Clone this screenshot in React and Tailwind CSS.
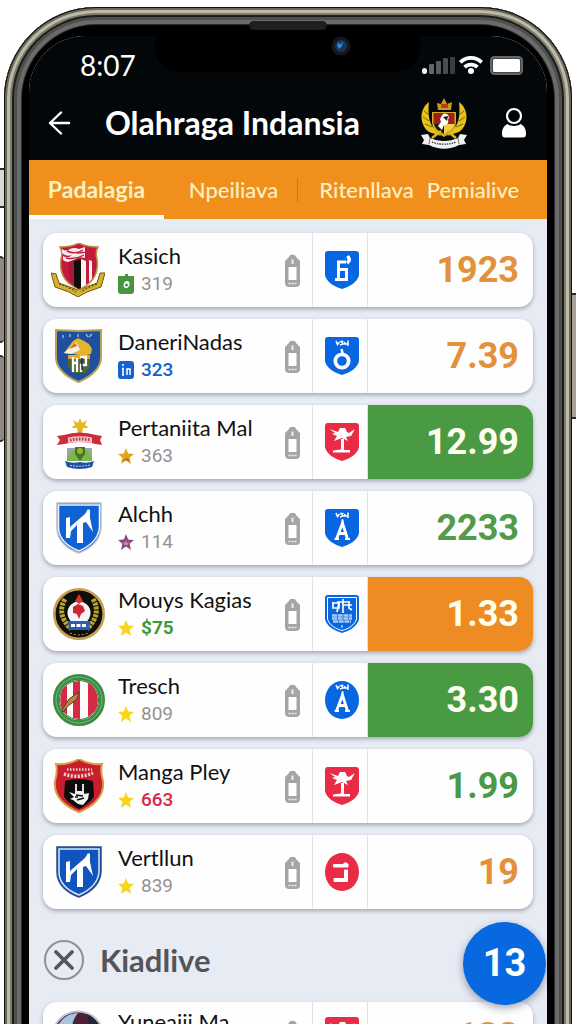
import clsx from "clsx";

const BLUE = "#0866e0";
const RED = "#e82c46";

const TEAMS = [
  { name: "Kasich", crest: "harbor", mark: "bag", score: "319", scoreClass: "text-[#929292]", badge: "six", odd: "1923", oddClass: "text-[#e3913a]" },
  { name: "DaneriNadas", crest: "house", mark: "in", score: "323", scoreClass: "text-[#0f5fc9] font-medium", badge: "ring", odd: "7.39", oddClass: "text-[#e3913a]" },
  { name: "Pertaniita Mal", crest: "ribbon", mark: "gold", score: "363", scoreClass: "text-[#929292]", badge: "palm", odd: "12.99", oddClass: "bg-[#4a9a44] text-[#fffff0]" },
  { name: "Alchh", crest: "silver", mark: "plum", score: "114", scoreClass: "text-[#929292]", badge: "tower", odd: "2233", oddClass: "text-[#519b4b]" },
  { name: "Mouys Kagias", crest: "laurel", mark: "star", score: "$75", scoreClass: "text-[#3f9a3c] font-bold", badge: "book", odd: "1.33", oddClass: "bg-[#ee8b22] text-[#fffff0]" },
  { name: "Tresch", crest: "stripes", mark: "star", score: "809", scoreClass: "text-[#929292]", badge: "towerRound", odd: "3.30", oddClass: "bg-[#4a9a44] text-[#fffff0]" },
  { name: "Manga Pley", crest: "crimson", mark: "star", score: "663", scoreClass: "text-[#dc2448] font-medium", badge: "palm", odd: "1.99", oddClass: "text-[#4a9a44]" },
  { name: "Vertllun", crest: "navy", mark: "star", score: "839", scoreClass: "text-[#929292]", badge: "corner", odd: "19", oddClass: "text-[#e3913a]" },
];

const NEXT_TEAM = { name: "Yuneaiji Ma", crest: "globe", mark: "star", score: "412", scoreClass: "text-[#929292]", badge: "palm", odd: "133", oddClass: "text-[#e3913a]" };

export default function App() {
  return (
    <div className="relative h-screen overflow-hidden bg-white px-1 pt-[7px] font-['Lato',sans-serif]">
      <SideButtons />
      <div className="relative min-h-full rounded-t-[92px] bg-black px-[25px] pt-[29px] shadow-[inset_0_0_0_1px_#0f0f0d,inset_0_0_0_3px_#6b685e,inset_0_0_0_6px_#bdbaa8,inset_0_0_0_8px_#7d7a6d,inset_0_0_0_10px_#1d1d1a,inset_0_0_0_13px_#4e504e,inset_0_0_0_17px_#6a6c6b,inset_0_0_0_18px_#2c2c2c]">
        <div className="absolute inset-x-0 top-[14px] mx-auto h-[9px] w-[78px] rounded-full bg-[#1f1f1f]" />
        <main className="overflow-hidden rounded-t-[56px] bg-[#e7ebf4]">
          <Header />
          <Tabs />
          <ul className="flex flex-col gap-3 px-[14px] pt-[14px]">
            {TEAMS.map((team) => (
              <TeamRow key={team.name} team={team} />
            ))}
          </ul>
          <section>
            <div className="flex h-[93px] items-center justify-between pl-[15px] pt-2">
              <div className="flex items-center gap-4">
                <button aria-label="Close" className="flex h-10 w-10 items-center justify-center rounded-full border-2 border-[#8f9094]">
                  <svg viewBox="0 0 20 20" className="h-5 w-5" stroke="#555" strokeWidth="3.6" strokeLinecap="round">
                    <path d="M2 2L18 18M18 2L2 18" />
                  </svg>
                </button>
                <h2 className="text-[31px] font-bold leading-9 text-[#555558]">Kiadlive</h2>
              </div>
              <button className="z-10 mr-px mt-2 h-[83px] w-[83px] shrink-0 rounded-full bg-[#0868e0] font-['Roboto',sans-serif] text-[38px] font-bold text-white shadow-[0_3px_8px_rgba(20,30,60,0.4)]">
                13
              </button>
            </div>
            <ul className="px-[14px]">
              <TeamRow team={NEXT_TEAM} compact />
            </ul>
          </section>
        </main>
      </div>
    </div>
  );
}

function SideButtons() {
  return (
    <>
      <div className="absolute left-0 top-[168px] h-10 w-1 border-y-2 border-[#2c2b27] bg-[#d9d9d3]" />
      <div className="absolute left-0 top-[256px] h-[87px] w-1 rounded-r border-y-2 border-[#2c2b27] bg-[#8f897e]" />
      <div className="absolute left-0 top-[355px] h-[87px] w-1 rounded-r border-y-2 border-[#2c2b27] bg-[#8f897e]" />
      <div className="absolute right-0 top-[293px] h-[126px] w-1 border-y-2 border-[#2c2b27] bg-[#a8a392]" />
    </>
  );
}

function Header() {
  return (
    <header className="relative h-[124px] bg-[#03070a] text-white">
      <div className="absolute left-[126px] top-0 h-9 w-[265px] rounded-b-[24px] bg-black" />
      <svg viewBox="0 0 20 20" className="absolute left-[302px] top-0 h-5 w-5">
        <circle cx="10" cy="10" r="9.5" fill="#14171c" />
        <circle cx="10" cy="10" r="6" fill="#1d3456" />
        <path d="M6 9l2-3 1 3 3-4-1 5-3 3z" fill="#2f8ce0" />
      </svg>
      <div className="flex h-[58px] items-center justify-between pl-[51px] pr-[23px]">
        <span className="text-[28px] leading-8">8:07</span>
        <div className="flex items-center gap-[3px]">
          <svg viewBox="0 0 34 18" className="h-[18px] w-[34px]">
            <rect x="0" y="12" width="5" height="6" rx="2.5" fill="#f2f2f2" />
            <rect x="7" y="8" width="5" height="10" rx="1" fill="#666" />
            <rect x="14" y="5" width="5" height="13" rx="1" fill="#5a5a5a" />
            <rect x="21" y="2" width="5" height="16" rx="1" fill="#4d4d4d" />
            <rect x="28" y="1" width="5" height="17" rx="1" fill="#3c3c3c" />
          </svg>
          <svg viewBox="0 0 24 18" className="h-[18px] w-6" fill="none" stroke="white" strokeWidth="3.8">
            <path d="M1.3 6.4C7.3 0.4 16.7 0.4 22.7 6.4" />
            <path d="M5.6 11.2C9.2 7.7 14.8 7.7 18.4 11.2" />
            <circle cx="12" cy="15" r="3" fill="white" stroke="none" />
          </svg>
          <svg viewBox="0 0 34 19" className="ml-1 h-[19px] w-[34px]">
            <rect x="1" y="1" width="31" height="17" rx="3.5" fill="#444" stroke="#666" strokeWidth="2" />
            <rect x="3" y="3" width="27" height="13" rx="1.5" fill="white" />
          </svg>
        </div>
      </div>
      <div className="flex h-[58px] items-center pl-[19px] pr-[20px]">
        <button aria-label="Back">
          <svg viewBox="0 0 24 24" className="h-6 w-6" fill="none" stroke="white" strokeWidth="2.4" strokeLinecap="round" strokeLinejoin="round">
            <path d="M21 12H2M13 1.5L2 12L13 22.5" />
          </svg>
        </button>
        <h1 className="ml-[33px] flex-1 whitespace-nowrap text-[32px] font-bold leading-9">Olahraga Indansia</h1>
        <Garuda />
        <button aria-label="Profile" className="ml-[33px]">
          <svg viewBox="0 0 26 32" className="h-8 w-[26px]">
            <path d="M6.5 17C9 19.5 17 19.5 19.5 17C23.5 19 25 22 25 27C25 29.5 24 30.5 22 30.5H4C2 30.5 1 29.5 1 27C1 22 2.5 19 6.5 17Z" fill="white" />
            <circle cx="13" cy="9.5" r="8.5" fill="#03070a" />
            <circle cx="13" cy="9" r="7" fill="#03070a" stroke="white" strokeWidth="2.2" />
          </svg>
        </button>
      </div>
    </header>
  );
}

function Garuda() {
  return (
    <svg viewBox="0 0 48 52" className="h-[52px] w-12">
      <path d="M9 5C-1 12 -1 28 9 35L21 39L15 32C8 27 8 14 9 5Z" fill="#e6c21c" />
      <path d="M39 5C49 12 49 28 39 35L27 39L33 32C40 27 40 14 39 5Z" fill="#e6c21c" />
      <path d="M4 14L9 18M3 20L9 24M5 27L12 30M44 14L39 18M45 20L39 24M43 27L36 30" stroke="#7c620e" strokeWidth="1" />
      <path d="M17 6L21 7L24 1L27 7L32 5L31 13L18 13Z" fill="#c99b19" />
      <path d="M21 7H28V11H21Z" fill="#bd3a1c" />
      <path d="M12 15H36V25C36 33 29 37 24 40C19 37 12 33 12 25Z" fill="#d4ab20" />
      <path d="M13.5 16H34.5V27H13.5Z" fill="#9f1f18" />
      <path d="M24 27H34V28C33 32 28 35 24 37Z" fill="#edd14a" />
      <path d="M14 27H24V37C18 34 15 31 14 27Z" fill="#1a1712" />
      <path d="M23 17C28 15 30 20 28 23C29 26 27 28 24 28L22 33L18 29L21 25L20 22Z" fill="#fff" />
      <path d="M23 20L28 19L27 24Z" fill="#1a1712" />
      <path d="M12 41L21 34M36 41L27 34" stroke="#d9b427" strokeWidth="2.5" />
      <path d="M1 38L8 37L10 41C19 45 29 45 38 41L40 37L47 38L44 43L46 47L39 48C29 53 19 53 9 48L2 47L4 43Z" fill="#f1f1ef" />
      <path d="M12 45C20 48 28 48 36 45" fill="none" stroke="#555" strokeWidth="1.6" strokeDasharray="1.5 1" />
      <path d="M10 41L9 47M38 41L39 47" stroke="#777" />
    </svg>
  );
}

function Tabs() {
  const tab = "whitespace-nowrap text-center";
  return (
    <nav className="flex h-[59px] bg-[#f18f1c] pr-[22px] text-[22px] leading-[59px] text-[#fdf0c4]">
      <button className={clsx(tab, "w-0 flex-[135] text-[23px] font-bold shadow-[inset_0_-4px_0_white]")}>Padalagia</button>
      <button className={clsx(tab, "ml-[6px] w-0 flex-[127] font-medium")}>Npeiliava</button>
      <span className="my-auto h-6 w-px bg-[#b87b33]" />
      <button className={clsx(tab, "ml-[14px] w-0 flex-[109] font-medium")}>Ritenllava</button>
      <button className={clsx(tab, "w-0 flex-[104] font-medium")}>Pemialive</button>
    </nav>
  );
}

function TeamRow({ team, compact }) {
  return (
    <li
      className={clsx(
        "flex items-stretch rounded-[14px] bg-[#fefefe] shadow-[0_2px_4px_rgba(60,65,80,0.4)]",
        compact ? "h-[68px]" : "h-[74px]"
      )}
    >
      <div className="flex min-w-0 flex-1 items-center gap-[13px] pl-2 pr-3">
        <Crest kind={team.crest} />
        <div className="min-w-0 flex-1">
          <div className="truncate text-[22px] leading-7 text-[#111]">{team.name}</div>
          <div className="flex items-center gap-[7px]">
            <Mark kind={team.mark} />
            <span className={clsx("font-['Roboto',sans-serif] text-[19px] leading-7", team.scoreClass)}>{team.score}</span>
          </div>
        </div>
        <svg viewBox="0 0 15 33" className="h-[33px] w-[15px] shrink-0">
          <path d="M4 3C4 0 11 0 11 3L15 7V29C15 32 13 33 11 33H4C2 33 0 32 0 29V7Z" fill="#a5a5a5" />
          <rect x="3.5" y="13" width="8" height="13" fill="white" />
          <path d="M7.5 5.5V10" stroke="#eee" strokeWidth="2" />
          <path d="M3.5 29.5H11.5" stroke="#eee" strokeWidth="1.6" strokeDasharray="2 1" />
        </svg>
      </div>
      <div className="flex w-14 items-center justify-center border-x border-[#e2e2e6] pl-[3px]">
        <Badge kind={team.badge} />
      </div>
      <div
        className={clsx(
          "flex w-[165px] items-center justify-end rounded-r-[14px] pr-[14px] font-['Roboto',sans-serif] text-[36px] font-bold",
          team.oddClass
        )}
      >
        {team.odd}
      </div>
    </li>
  );
}

const STAR_COLORS = { gold: "#dfa51f", plum: "#8c4a80", star: "#f7d51d" };

function Mark({ kind }) {
  if (kind === "bag") {
    return (
      <svg viewBox="0 0 16 20" className="h-5 w-4">
        <path d="M7 0H10V2H16V17C16 19 15 20 13 20H3C1 20 0 19 0 17V2H7Z" fill="#47963f" />
        <path d="M6 9C9 5 13 8 11 12C9 16 4 14 6 9Z" fill="white" />
        <circle cx="8.5" cy="11" r="1.5" fill="#47963f" />
      </svg>
    );
  }
  if (kind === "in") {
    return (
      <svg viewBox="0 0 16 18" className="h-[18px] w-4">
        <rect width="16" height="18" rx="3" fill="#1762d0" />
        <path d="M5 7V14M9 14V8H12V14M4 7.5H6M4 14H6M5 3V5" stroke="white" strokeWidth="1.5" fill="none" />
      </svg>
    );
  }
  return (
    <svg viewBox="0 0 16 16" className="h-4 w-4" fill={STAR_COLORS[kind]}>
      <path d="M8 0L10.2 5.4L16 6L11.6 9.8L13 16L8 12.5L3 16L4.4 9.8L0 6L5.8 5.4Z" />
      {kind === "gold" && <path d="M8 10L11 11L11 14L8 12L4 14Z" fill="#a9771a" />}
      {kind === "plum" && <path d="M5 8L7 9L8 6L9 9L11 8L9.5 11H6.5Z" fill="#c48db6" />}
    </svg>
  );
}

const SHIELD = "M3 0H31C33 0 34 1 34 3V24C33 31 24 36 17 38C10 36 1 31 0 24V3C0 1 1 0 3 0Z";

function Badge({ kind }) {
  const round = kind === "towerRound" || kind === "corner";
  const fill = kind === "palm" || kind === "corner" ? RED : BLUE;
  return (
    <svg viewBox="0 0 34 38" className="h-[38px] w-[34px]">
      {round ? <ellipse cx="17" cy="19" rx="17" ry="19" fill={fill} /> : <path d={SHIELD} fill={fill} />}
      {kind === "six" && (
        <g fill="none" stroke="white" strokeWidth="3">
          <path d="M21 11H13.5V28.5M10 28.5H23M21.5 28V18.5H14" />
          <path d="M22 12C25 10 25 8 22.5 5" strokeWidth="3.5" />
        </g>
      )}
      {kind === "ring" && (
        <g fill="none" stroke="white">
          <circle cx="17" cy="24" r="6.7" strokeWidth="3.8" />
          <path d="M18 18L16.5 12" strokeWidth="2.5" />
          <TinyMarks />
        </g>
      )}
      {kind === "palm" && (
        <g fill="white">
          <path d="M16 16H19V27H25V29.5H8V27.5L16 26.5Z" />
          <path d="M4.5 6L13 9L15 5L20 5L22 9L24 10L30 6L26 13L21 14L23 18L17 15L9 18L12 13L7 11L10 10Z" />
        </g>
      )}
      {(kind === "tower" || kind === "towerRound") && (
        <g fill="none" stroke="white">
          <path d="M11.5 30L17.5 14L22.5 30M13.5 24.5H21" strokeWidth="2.8" />
          <path d="M9.5 30H14M20 30H25M17.5 14V10.5" strokeWidth="2" />
          <TinyMarks />
        </g>
      )}
      {kind === "book" && (
        <g fill="none" stroke="white">
          <path d="M2.5 2.5H31.5V24C30 30 23 34 17 35.5C11 34 4 30 2.5 24Z" strokeWidth="1" />
          <path d="M7 8H14V13H8V7M12 7H24M18 4V18M24 6V13L27 15M19 10H27M14 8L12 17" strokeWidth="1.7" />
          <path d="M7 20.5H27M7 23.5H27M8 26.5H26" strokeWidth="2.4" stroke="#a9caf5" strokeDasharray="5 0.7" />
          <path d="M17 30V33" />
        </g>
      )}
      {kind === "corner" && (
        <path d="M8.5 11.5H18L20 9.5L23 11V14H8.5ZM19.5 17H22.5V28.5H9V25.5H19.5Z" fill="white" stroke="white" />
      )}
    </svg>
  );
}

function TinyMarks() {
  return <path d="M11 4L12.5 7.5L14.5 5M15 8L18 7L16 4.5H18.5M20 5L19.5 7H23.5M23 3.5V9" strokeWidth="1.5" />;
}

function Crest({ kind }) {
  return (
    <svg viewBox="0 0 54 54" className="h-[54px] w-[54px] shrink-0">
      {CRESTS[kind]}
    </svg>
  );
}

const MONOGRAM = (
  <path d="M15 17L19 16V26L27 19L34 13L37 8L39 9V17L42 31L35 21L32 22V42H26V24L20 30L19 37H15Z" fill="white" />
);

const CRESTS = {
  harbor: (
    <>
      <path d="M0 30L5 31L8 40L27 47L46 40L49 30L54 30L50 44L36 49L27 54L18 49L4 44Z" fill="#d6b32a" stroke="#6d5712" />
      <path d="M9 4Q20 4 28 0Q36 4 47 4Q44 9 46 16C48 31 41 41 28 46C15 41 8 31 10 16Q12 9 9 4Z" fill="#c51b3a" stroke="#b79347" strokeWidth="1.5" />
      <path d="M11 6Q15 9 19 6Q23 4 28 6L34 4V9Q29 8 25 11L34 10V15Q28 13 23 17Q17 21 12 17L12 13Q17 16 21 12Q15 14 11 10Z" fill="#f8eef0" />
      <path d="M16 8Q24 12 32 7M15 15Q24 17 33 12" stroke="#c51b3a" strokeWidth="1.4" fill="none" />
      <path d="M17 19L28 15V46L19 40Z" fill="#a91934" />
      <path d="M23 18L30 16V45L28 46L23 43Z" fill="#120b0c" />
      <path d="M30 16L35 18V42L30 45ZM38 17L41 18V36L38 39Z" fill="#f7f3f3" />
      <path d="M8 41Q18 44 25 49M46 41Q37 44 30 49" stroke="#6d5712" strokeWidth="1.5" strokeDasharray="2 1.5" fill="none" />
    </>
  ),
  house: (
    <>
      <path d="M5 1L27 2L50 1V28C50 40 39 48 27.5 53C16 48 5 40 5 28Z" fill="#1f4f9f" stroke="#b7a25c" strokeWidth="2" />
      <path d="M12 6V9M19 5V8M27 5V8M35 5L37 8M38 8L41 5" stroke="#a9c1e6" strokeWidth="1.3" />
      <path d="M13 24L22 12L27 9L33 12L38 15L41 20L40 25L32 27L23 25Z" fill="#e3b52d" />
      <path d="M13 24L25 13L29 21L20 25Z" fill="#f6efe6" />
      <path d="M18 20L24 14L26 17Z" fill="#c56c2d" />
      <path d="M17 26H39V38L35 44H22L17 37Z" fill="#4f6333" />
      <path d="M17 26H39V30H17Z" fill="#e0a92d" />
      <path d="M22 28V43M26 29V43M21 34H27M29 28H35V36H30V43" stroke="white" strokeWidth="2.3" fill="none" />
      <path d="M31 29V41" stroke="#173159" strokeWidth="1.5" />
    </>
  ),
  ribbon: (
    <>
      <path d="M29 3L31 8L36 5L34 10L38 13L32 13L31 19H27L26 13L20 13L24 10L22 5L27 8Z" fill="#e8b620" />
      <path d="M6 21L13 20Q28 15 45 20L51 21L49 25L51 30L45 29Q29 25 13 29L6 30L9 25Z" fill="#cc2b3b" />
      <path d="M17 22.5Q29 20 41 22.5V28Q29 26 17 28Z" fill="#f0c9cd" />
      <path d="M19 25Q29 23 40 25" stroke="#b23443" strokeWidth="3" strokeDasharray="1.5 1.5" fill="none" />
      <path d="M16 33H41V44H16Z" fill="#9aa6a4" />
      <path d="M16 43L23 34L29 43L35 34L41 43V46H16Z" fill="#78b84d" />
      <path d="M24 32H34V39L29 46L24 39Z" fill="#477529" />
      <circle cx="29" cy="36" r="3" fill="#9fb32d" />
      <path d="M14 46Q21 49 29 47Q36 49 43 46L41 52Q29 56 16 52Z" fill="#2450a3" />
      <path d="M19 50.5Q29 52 39 50" stroke="#bccbe9" strokeDasharray="2 1" fill="none" />
    </>
  ),
  silver: (
    <>
      <path d="M6 2H50V27C49 40 38 48 28 52C17 48 6 40 6 27Z" fill="#0f62d3" stroke="#bdbfc6" strokeWidth="1.5" />
      <path d="M7.5 4H48.5V27C47 39 37 46 28 50C18 46 8 39 7.5 27Z" fill="none" stroke="#f4f5f8" strokeWidth="1.5" />
      {MONOGRAM}
    </>
  ),
  navy: (
    <>
      <path d="M6 2H50V27C49 40 38 48 28 52C17 48 6 40 6 27Z" fill="#1054bf" stroke="#274c8a" strokeWidth="1.5" />
      <path d="M8 4H48V27C47 39 37 46 28 50C18 46 8 39 8 27Z" fill="none" stroke="#dfe7f4" strokeWidth="1.5" />
      {MONOGRAM}
    </>
  ),
  laurel: (
    <>
      <circle cx="28" cy="27" r="24.7" fill="#0f0e0c" stroke="#c9a052" strokeWidth="2.6" />
      <path d="M14 12Q5 27 20 42M42 12Q51 27 36 42" stroke="#b9a52c" strokeWidth="5" strokeDasharray="3 1" fill="none" />
      <circle cx="28" cy="26" r="11.5" fill="#f5f6fa" />
      <path d="M28 7L24 14L28 17L32 14Z" fill="#d8362b" />
      <path d="M22 20L27 17L32 19L34 24L30 27L28 32L26 27L22 26Z" fill="#d02435" />
      <path d="M17 34H39L38 43H18Z" fill="#2560b7" />
      <path d="M20 38.5H36" stroke="white" strokeWidth="3" strokeDasharray="4 1.5" />
      <path d="M19 46Q28 50 37 46" stroke="#c3a92a" strokeDasharray="2 2" fill="none" />
    </>
  ),
  stripes: (
    <>
      <circle cx="28" cy="27" r="23" fill="#fff" stroke="#3c8d43" strokeWidth="6" />
      <circle cx="28" cy="27" r="23" fill="none" stroke="#79b57d" strokeWidth="1" />
      <circle cx="28" cy="27" r="19.5" fill="#fcfafa" stroke="#2f7a38" />
      <path d="M11 17Q13 14 16 12V42Q6 34 11 17ZM22 9L29 8V46L22 45ZM37 10L41 12Q51 25 44 38L37 44Z" fill="#d42a42" />
      <path d="M11 37L18 26L28 19L26 26L17 33L12 39Z" fill="#b18a46" stroke="#55401c" />
    </>
  ),
  crimson: (
    <>
      <path d="M28 0Q38 6 51 5Q49 12 52 22C54 38 41 48 28 53C15 48 2 38 4 22Q7 12 5 5Q18 6 28 0Z" fill="#c81e2d" stroke="#dc9d43" strokeWidth="2" />
      <path d="M14 22Q28 18 42 22L43 38Q37 46 28 50Q19 46 13 38Z" fill="#0d0b0c" />
      <path d="M16 10.5H41" stroke="#f2d4d5" strokeWidth="2.4" strokeDasharray="1.5 1.5" />
      <path d="M13 15Q28 20 42 14" stroke="#f2d4d5" strokeWidth="3.5" strokeDasharray="2 1.5" fill="none" />
      <path d="M25 25V32M32 25V32" stroke="#f2f2f2" strokeWidth="1.8" />
      <path d="M18 33L24 35V32H33V35L38 34L37 40L32 46L27 45L22 41L19 40L23 38Z" fill="#f2f2f2" />
      <path d="M25 36L32 37M26 41L33 39M24 38H27" stroke="#0d0b0c" strokeWidth="1.5" />
    </>
  ),
  globe: (
    <>
      <circle cx="27" cy="28" r="25.5" fill="#4d2238" stroke="#c3c6cc" strokeWidth="2" />
      <path d="M4 24Q9 5 27 4Q20 12 21 24Z" fill="#a7c6dd" />
      <path d="M36 5Q50 12 52 28H40Z" fill="#22263d" />
    </>
  ),
};
